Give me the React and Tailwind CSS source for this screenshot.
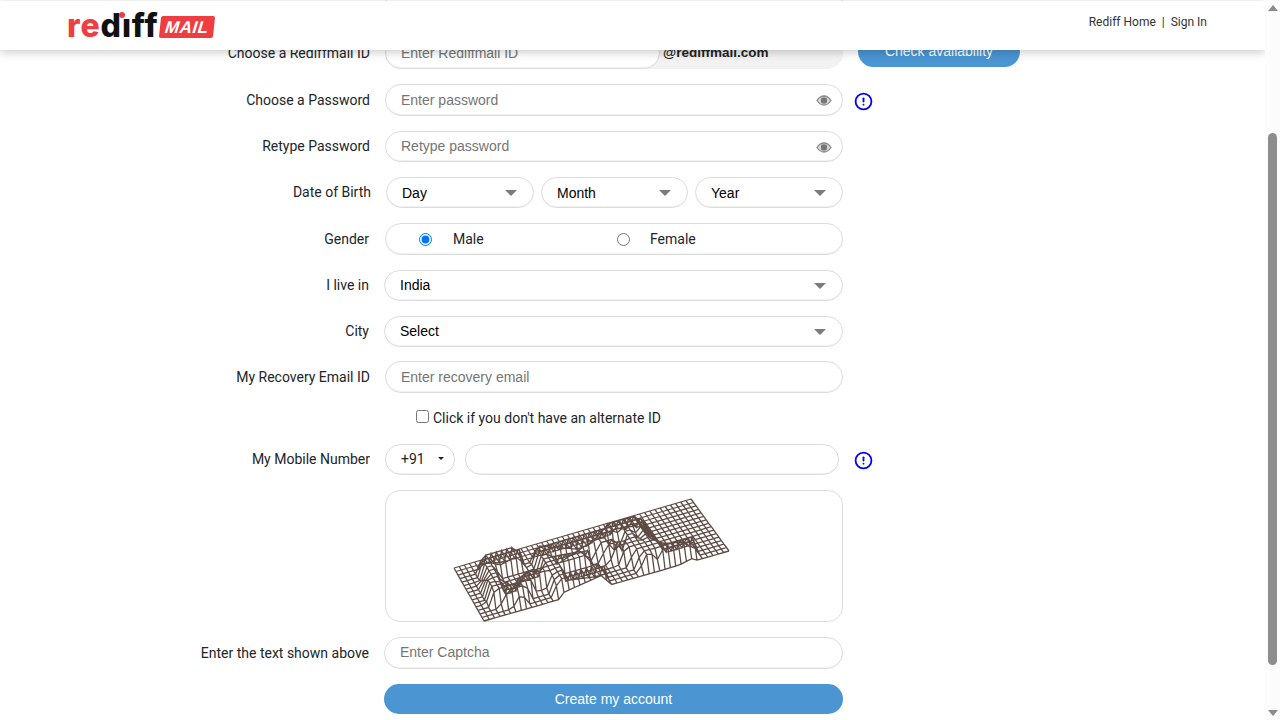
import React from 'react';
import { CircleAlert } from 'lucide-react';

// captcha mesh: a plate seen at an angle with raised letter strokes
const strokes = [
  // G
  [0.11, 0.76, 0.22, 0.74], [0.11, 0.76, 0.08, 0.26], [0.08, 0.26, 0.16, 0.15], [0.16, 0.15, 0.23, 0.32], [0.23, 0.32, 0.28, 0.31],
  // E
  [0.32, 0.66, 0.33, 0.1], [0.32, 0.66, 0.52, 0.6], [0.33, 0.4, 0.46, 0.39], [0.33, 0.1, 0.48, 0.08],
  // A
  [0.52, 0.6, 0.66, 0.7], [0.66, 0.7, 0.68, 0.12], [0.55, 0.5, 0.67, 0.22],
  // L
  [0.715, 0.7, 0.74, 0.13], [0.74, 0.13, 0.85, 0.11],
];

const NU = 46;
const NV = 15;

function distToSeg(x, y, s) {
  const ax = s[0] * NU, ay = s[1] * NV, bx = s[2] * NU, by = s[3] * NV;
  const dx = bx - ax, dy = by - ay;
  const t = Math.max(0, Math.min(1, ((x - ax) * dx + (y - ay) * dy) / (dx * dx + dy * dy)));
  return Math.hypot(x - ax - t * dx, y - ay - t * dy);
}

function point(i, j) {
  const u = i / NU, v = j / NV;
  let d = 99;
  for (const s of strokes) d = Math.min(d, distToSeg(i, j, s));
  const h = 16 * Math.max(0, Math.min(1, (1.8 - d) / 0.8));
  const x = (1 - u) * (1 - v) * 483 + u * (1 - v) * 728 + (1 - u) * v * 453 + u * v * 690;
  const y = (1 - u) * (1 - v) * 620 + u * (1 - v) * 550 + (1 - u) * v * 567 + u * v * 498;
  return (x - 385).toFixed(1) + ' ' + (y - 490 - h).toFixed(1);
}

function meshPath() {
  let d = '';
  for (let j = 0; j <= NV; j++) {
    for (let i = 0; i <= NU; i++) d += (i ? 'L' : 'M') + point(i, j);
  }
  for (let i = 0; i <= NU; i++) {
    for (let j = 0; j <= NV; j++) d += (j ? 'L' : 'M') + point(i, j);
  }
  return d;
}

const Caret = () => (
  <svg width="12" height="6" viewBox="0 0 12 6" className="shrink-0">
    <path d="M0 0h12L6 6z" fill="#7b7b7b" />
  </svg>
);

const Eye = () => (
  <svg width="16" height="11" viewBox="0 0 16 11" className="absolute right-[10px] top-[10px]">
    <path d="M1 5.500C3 2.500 5.300 1 8 1s5 1.500 7 4.500C13 8.500 10.700 10 8 10S3 8.500 1 5.500z" fill="#ddd" stroke="#8a8a8a" strokeWidth="1.300" />
    <circle cx="8" cy="5.500" r="3.200" fill="#777" />
  </svg>
);

const Info = ({ className }) => (
  <CircleAlert size={19} color="#0000ff" strokeWidth={2.3} className={'mt-[2px] shrink-0 ' + className} />
);

const boxCls = 'border border-[#dcdcdc] rounded-[16px] bg-white shadow-[inset_0_-1px_0_#f1f1f1]';
const inputCls = 'w-full h-full px-[15px] outline-none rounded-[16px] bg-transparent text-[14px] text-black placeholder:text-[#757575] font-["Liberation_Sans",sans-serif]';

function Row({ label, className, labelClass = 'pr-0', children }) {
  return (
    <div className={'flex items-center ' + className}>
      <label className={'w-[370px] text-right text-[14px] text-[#212529] shrink-0 ' + labelClass}>{label}</label>
      <div className="w-[15px] shrink-0" />
      {children}
    </div>
  );
}

function Field({ placeholder, eye, inputClass = '' }) {
  return (
    <div className={'relative w-[458px] h-full ' + boxCls}>
      <input placeholder={placeholder} className={inputCls + ' ' + inputClass} />
      {eye && <Eye />}
    </div>
  );
}

function Drop({ text, className, textClass = '' }) {
  return (
    <div className={'flex items-center justify-between h-full pl-[15px] pr-[16px] text-[14px] text-black font-["Liberation_Sans",sans-serif] ' + boxCls + ' ' + className}>
      <span className={textClass}>{text}</span>
      <Caret />
    </div>
  );
}

export default function App() {
  return (
    <div className="flex h-screen overflow-hidden bg-white font-['Roboto',sans-serif]">
      <div className="relative flex-1 overflow-hidden">
        {/* top bar sits over the scrolled form */}
        <header className="absolute left-0 right-0 top-px z-10 flex h-[49px] items-center justify-between bg-white pl-[67px] pr-[58px] shadow-[0_2px_9px_rgba(0,0,0,0.22)]">
          <div className="flex items-center">
            <div className="relative font-['Inter',sans-serif] text-[32px] font-extrabold leading-none tracking-[0.9px] mt-[1px]">
              <span className="text-[#ef3e42]">re</span>
              <span className="text-[#111]">dıff</span>
              <span className="absolute left-[52px] top-[2px] h-[6px] w-[6px] rounded-full bg-[#ef3e42]" />
            </div>
            <div className="ml-[1px] mt-[2px] flex h-[22px] w-[54px] -skew-x-6 items-center justify-center rounded-[2px] bg-[#ef3e42]">
              <span className="text-[17px] font-bold italic leading-none tracking-[0.5px] text-white font-['Liberation_Sans',sans-serif]">MAIL</span>
            </div>
          </div>
          <div className="flex items-center text-[12px] text-[#333] -mt-[8px]">
            <span>Rediff Home</span>
            <span className="mx-[6px]">|</span>
            <span>Sign In</span>
          </div>
        </header>

        <form className="-mt-[12px]">
          <Row label="" className="h-[32px]"><Field /></Row>

          <Row label="Choose a Rediffmail ID" className="h-[32px] mt-[17px]">
            <div className="relative flex w-[458px] h-full items-center rounded-[16px] bg-[#f2f2f2]">
              <div className={'w-[275px] h-full shrink-0 ' + boxCls}>
                <input placeholder="Enter Rediffmail ID" className={inputCls} />
              </div>
              <span className="ml-[3px] text-[13.500px] font-bold text-[#222] font-['Liberation_Sans',sans-serif]">@rediffmail.com</span>
            </div>
            <button type="button" className="ml-[15px] -mt-[4px] h-[31px] w-[162px] rounded-[16px] bg-[#4a95d2] text-[14px] text-white font-['Liberation_Sans',sans-serif]">
              Check availability
            </button>
          </Row>

          <Row label="Choose a Password" className="h-[32px] mt-[15px]">
            <Field placeholder="Enter password" eye />
            <Info className="ml-[11px]" />
          </Row>
          <Row label="Retype Password" className="h-[31px] mt-[15px]">
            <Field placeholder="Retype password" inputClass="pb-[2px]" eye />
          </Row>
          <Row label="Date of Birth" labelClass="translate-x-px" className="h-[31px] mt-[15px]">
            <div className="flex w-[458px] h-full gap-[7px] pl-px">
              <Drop text="Day" textClass="mt-[2px]" className="w-[148px]" />
              <Drop text="Month" textClass="mt-[2px]" className="w-[147px]" />
              <Drop text="Year" textClass="mt-[2px]" className="w-[148px]" />
            </div>
          </Row>
          <Row label="Gender" labelClass="pr-px" className="h-[32px] mt-[15px]">
            <div className={'flex items-center w-[458px] h-full text-[14px] text-[#212529] ' + boxCls}>
              <input type="radio" name="gender" defaultChecked className="ml-[33px] m-0 w-[13px] h-[13px]" />
              <span className="ml-[21px] w-[164px]">Male</span>
              <input type="radio" name="gender" className="m-0 w-[13px] h-[13px]" />
              <span className="ml-[20px]">Female</span>
            </div>
          </Row>
          <Row label="I live in" labelClass="pr-px" className="h-[31px] mt-[15px]">
            <Drop text="India" className="w-[459px] -ml-px" />
          </Row>
          <Row label="City" labelClass="pr-px" className="h-[31px] mt-[15px]">
            <Drop text="Select" className="w-[459px] -ml-px" />
          </Row>
          <Row label="My Recovery Email ID" className="h-[32px] mt-[14px]">
            <Field placeholder="Enter recovery email" />
          </Row>
          <div className="flex h-[20px] items-center mt-[15px] pl-[416px] text-[14px] text-[#212529]">
            <input type="checkbox" className="m-0 w-[13px] h-[13px] -mt-[3px]" />
            <span className="ml-[4px]">Click if you don't have an alternate ID</span>
          </div>
          <Row label="My Mobile Number" className="h-[31px] mt-[16px]">
            <div className={'flex items-center justify-between w-[70px] h-full pl-[15px] pr-[10px] text-[14px] text-[#212529] ' + boxCls}>
              <span>+91</span>
              <svg width="6" height="3" viewBox="0 0 6 3" className="-mt-[2px]"><path d="M0 0h6L3 3z" fill="#222" /></svg>
            </div>
            <div className={'ml-[10px] w-[374px] h-full ' + boxCls} />
            <Info className="ml-[15px]" />
          </Row>
          <Row label="" className="h-[132px] mt-[15px]">
            <div className="w-[458px] h-full rounded-[15px] border border-[#dcdcdc]">
              <svg viewBox="0 0 458 132" className="block w-[458px] h-[132px]" fill="none">
                <path d={meshPath()} stroke="#4b3730" strokeWidth="1.3" strokeOpacity="0.9" />
              </svg>
            </div>
          </Row>
          <Row label="Enter the text shown above" labelClass="pr-px" className="h-[32px] mt-[15px]">
            <div className={'w-[459px] -ml-px h-full ' + boxCls}>
              <input placeholder="Enter Captcha" className={inputCls + ' pb-[2px]'} />
            </div>
          </Row>
          <Row label="" className="h-[30px] mt-[15px]">
            <button type="button" className="w-[459px] -ml-px h-full rounded-[16px] bg-[#4a95d2] text-[14px] text-white font-['Liberation_Sans',sans-serif]">
              Create my account
            </button>
          </Row>
        </form>
      </div>

      {/* page scrollbar */}
      <div className="flex w-[15px] shrink-0 flex-col items-center bg-[#fcfcfc]">
        <svg width="10" height="6" viewBox="0 0 10 6" className="mt-[5px]"><path d="M5 0l5 6H0z" fill="#8b8b8b" /></svg>
        <div className="mt-[122px] h-[532px] w-[9px] rounded-full bg-[#8d8d8d]" />
        <svg width="10" height="6" viewBox="0 0 10 6" className="mt-[45px]"><path d="M0 0h10L5 6z" fill="#8b8b8b" /></svg>
      </div>
    </div>
  );
}
